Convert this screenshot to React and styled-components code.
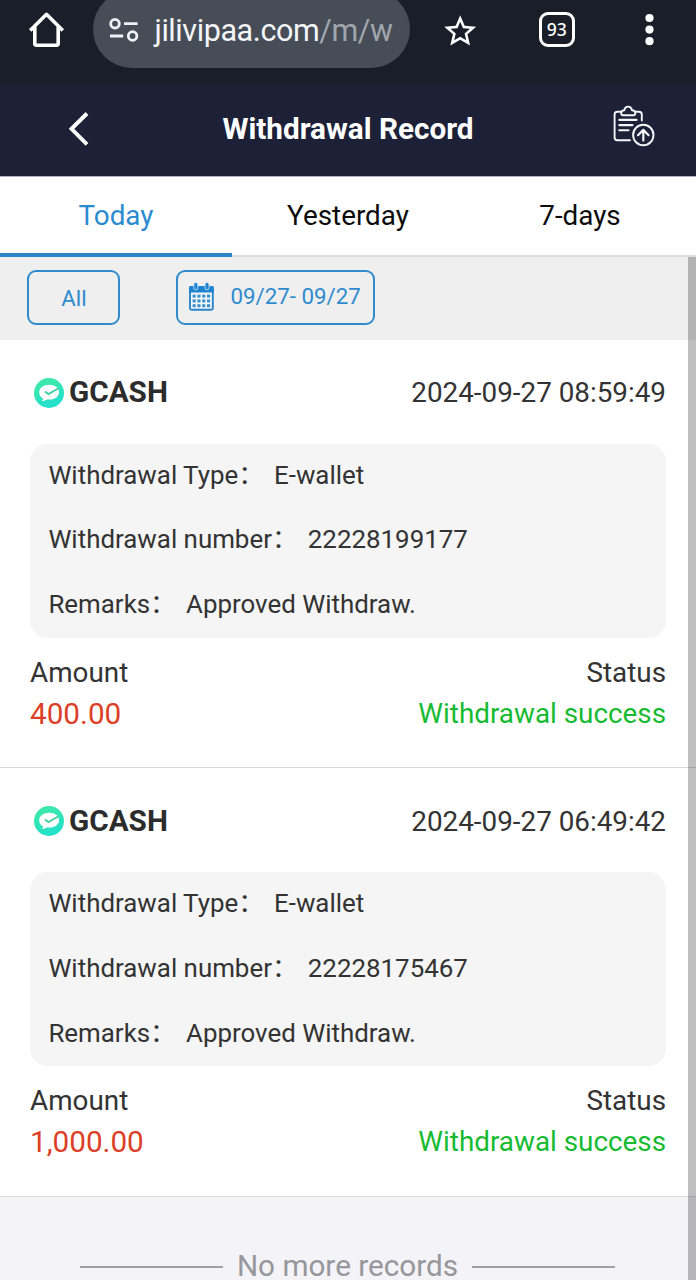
import React from "react";
import styled, { createGlobalStyle } from "styled-components";
import { MdStarOutline } from "react-icons/md";

const GlobalStyle = createGlobalStyle`
  * { box-sizing: border-box; }
  body {
    margin: 0;
    background: #f3f3f8;
    font-family: Roboto, "Noto Sans CJK SC", sans-serif;
    color: #333;
  }
`;

const Screen = styled.div`
  width: 696px;
  height: 1280px;
  overflow: hidden;
  display: flex;
  flex-direction: column;
`;

const BrowserBar = styled.div`
  flex: none;
  height: 85px;
  display: flex;
  align-items: flex-start;
  background: #191e29;
  color: #fff;
`;

const HomeSlot = styled.div`
  width: 93px;
  padding: 10px 0 0 27px;
  svg { display: block; }
`;

const AddressPill = styled.div`
  width: 317px;
  height: 78px;
  margin-top: -10px;
  padding: 2px 0 0 15px;
  border-radius: 39px;
  background: #464d57;
  display: flex;
  align-items: center;
`;

const Url = styled.span`
  margin-left: 15.5px;
  font-size: 30.5px;
  letter-spacing: -0.42px;
  white-space: nowrap;
  color: #f3f5f8;
  span { color: #a1a6ae; }
`;

const BarIcons = styled.div`
  flex: 1;
  display: flex;
  padding: 12px 42px 0 31px;
  align-items: flex-start;
  justify-content: space-between;
  svg { display: block; }
`;

const TabCount = styled.div`
  width: 36px;
  height: 35px;
  margin-right: 10px;
  border: 3.6px solid #fff;
  border-radius: 9px;
  display: flex;
  align-items: center;
  justify-content: center;
  font: 500 17.5px/1 "Noto Sans", sans-serif;
`;

const Header = styled.header`
  flex: none;
  height: 92px;
  border-bottom: 1px solid #aeb0c4;
  display: grid;
  grid-template-columns: 1fr auto 1fr;
  align-items: center;
  background: #1d2137;
  color: #fff;
  svg { display: block; }
`;

const BackButton = styled.div`
  padding: 0 0 4px 66px;
`;

const Title = styled.h1`
  margin: 0;
  padding-bottom: 4px;
  font-size: 29.7px;
  font-weight: 700;
  white-space: nowrap;
`;

const HistoryButton = styled.div`
  justify-self: end;
  padding: 0 40px 9px 0;
`;

const Tabs = styled.nav`
  flex: none;
  height: 80px;
  display: grid;
  grid-template-columns: repeat(3, 1fr);
  background: #fff;
  border-bottom: 2px solid #dcdcdc;
`;

const Tab = styled.div`
  height: 80px;
  padding-bottom: ${(p) => (p.$active ? "0" : "3px")};
  border-bottom: ${(p) => (p.$active ? "4px solid #2a86c9" : "0")};
  padding-top: ${(p) => (p.$active ? "1px" : "0")};
  display: flex;
  align-items: center;
  justify-content: center;
  font-size: 27.84px;
  color: ${(p) => (p.$active ? "#2a8bd0" : "#0c0c0c")};
`;

const Body = styled.main`
  position: relative;
  flex: 1;
  min-height: 0;
`;

const Filters = styled.div`
  height: 83px;
  padding: 12.5px 27.4px 0;
  display: flex;
  gap: 56px;
  background: #efefef;
`;

const FilterButton = styled.div`
  width: ${(p) => p.$width}px;
  height: 55.5px;
  border: 2px solid #2f8bce;
  border-radius: 9px;
  display: flex;
  align-items: center;
  justify-content: ${(p) => (p.$date ? "flex-start" : "center")};
  gap: 16.5px;
  padding: ${(p) => (p.$date ? "0 0 2px 9.5px" : "2px 0 0")};
  font-size: 22.3px;
  white-space: nowrap;
  color: #2f8bce;
`;

const Card = styled.section`
  height: 428.4px;
  padding: 0 30px;
  background: #fff;
  border-bottom: 1px solid #d9d9d9;
`;

const CardHead = styled.div`
  height: 103.5px;
  display: flex;
  align-items: center;
  justify-content: space-between;
  padding-left: 4px;
`;

const Provider = styled.div`
  display: flex;
  align-items: center;
  gap: 5px;
  font-size: 29.7px;
  font-weight: 700;
  color: #2c2c2c;
  svg { display: block; position: relative; top: 1px; }
`;

const Time = styled.div`
  padding-top: 2px;
  font-size: 27.84px;
`;

const Details = styled.div`
  height: 194.6px;
  padding: 0 18.4px;
  border-radius: 18px;
  background: #f5f5f5;
`;

const Detail = styled.div`
  height: 64.9px;
  line-height: 63.2px;
  font-size: 25.9px;
  white-space: nowrap;
  span { margin-left: 10px; }
`;

const Summary = styled.div`
  display: flex;
  justify-content: space-between;
  padding-top: 14px;
`;

const Column = styled.div`
  text-align: ${(p) => p.$align || "left"};
`;

const Label = styled.div`
  font-size: 27.84px;
  line-height: 41px;
`;

const Amount = styled.div`
  font-size: 29.7px;
  line-height: 41px;
  color: #dc3f27;
`;

const Status = styled.div`
  font-size: 27.84px;
  line-height: 41px;
  color: #16bb31;
`;

const EndNote = styled.div`
  display: flex;
  align-items: center;
  justify-content: center;
  gap: 14px;
  padding: 56.5px 1px 0 0;
  font-size: 29.7px;
  line-height: 26px;
  white-space: nowrap;
  color: #97979b;
`;

const Rule = styled.span`
  width: 143px;
  height: 2px;
  margin-top: 1px;
  background: #a0a0a4;
`;

const Scrollbar = styled.div`
  position: absolute;
  top: 0;
  right: 0;
  width: 8px;
  height: 100%;
  background: rgba(0, 0, 0, 0.25);
`;

const HomeIcon = () => (
  <svg width="39" height="39" viewBox="27 10 39 39" fill="none" stroke="#fff" strokeWidth="3.6" strokeLinecap="butt" strokeLinejoin="round">
    <path d="M30.2 30.6 46.5 14.3 62.8 30.6" />
    <path d="M34.8 27V43.6Q34.8 45.2 36.4 45.2H56.6Q58.2 45.2 58.2 43.6V27" />
  </svg>
);

const TuneIcon = () => (
  <svg width="31" height="24" viewBox="108 18 31 24" fill="none" stroke="#eef1f5" strokeWidth="2.8">
    <circle cx="115" cy="23.7" r="4.3" />
    <path d="M124 23.7h13.6M110 36h13.2" />
    <circle cx="132.6" cy="36" r="4.3" />
  </svg>
);

const MenuDots = () => (
  <svg width="10" height="36" viewBox="0 0 10 36" fill="#fff">
    <circle cx="5.5" cy="6" r="4.1" />
    <circle cx="5.5" cy="17.6" r="4.1" />
    <circle cx="5.5" cy="29.2" r="4.1" />
  </svg>
);

const BackIcon = () => (
  <svg width="24" height="36" viewBox="67 111 24 36" fill="none" stroke="#fff" strokeWidth="3.9">
    <path d="M88 113.5 72.5 128.8 88 144.3" />
  </svg>
);

const HistoryIcon = () => (
  <svg width="44" height="44" viewBox="612 104 44 44" fill="none" stroke="#f4f5fa" strokeWidth="1.9" strokeLinecap="round" strokeLinejoin="round">
    <path d="M621 111.8H617.3Q614.6 111.8 614.6 114.5V137.6Q614.6 140.3 617.3 140.3H630M635.4 111.8H639Q641.8 111.8 641.8 114.5V120.5" />
    <path d="M623 115.3H633.4Q635.3 115.3 635.3 113.2Q635.2 110.3 632 110.2Q631.2 106.6 628.1 106.6Q625 106.6 624.3 110.2Q621.3 110.3 621.2 113.2Q621.2 115.3 623 115.3Z" />
    <path d="M619.3 119.9H636.5M619.3 125.1H632.5M619.3 130.2H628.5" strokeWidth="2.1" />
    <circle cx="643.3" cy="135" r="10.2" />
    <path d="M643.3 140.6V130.2M638 135.2 643.3 129.9 648.6 135.2" strokeWidth="2.2" />
  </svg>
);

const CalendarIcon = () => (
  <svg width="26" height="29" viewBox="188 282 26 29">
    <rect x="190" y="287" width="22.8" height="22.8" rx="1.5" fill="#f3f6f9" stroke="#2a86c9" strokeWidth="1.9" />
    <path d="M189 292.5V287.5Q189 286 190.5 286H212.3Q213.8 286 213.8 287.5V292.5Z" fill="#1f84d1" />
    <g fill="#1f84d1" stroke="#dcebf7" strokeWidth="0.8">
      <rect x="193.8" y="282.4" width="4" height="7.4" rx="2" />
      <rect x="205" y="282.4" width="4" height="7.4" rx="2" />
    </g>
    <g fill="#3a8fce">
      {[294.6, 299.4, 304.2].map((y) =>
        [192.6, 197.4, 202.2, 207].map((x) => <rect key={`${x}-${y}`} x={x} y={y} width="3.1" height="3" />)
      )}
    </g>
  </svg>
);

const GcashIcon = () => (
  <svg width="30" height="30" viewBox="0 0 30 30">
    <defs>
      <linearGradient id="gcash" x1="0" y1="0" x2="0.4" y2="1">
        <stop offset="0" stopColor="#45eaa2" />
        <stop offset="1" stopColor="#22e0cb" />
      </linearGradient>
    </defs>
    <circle cx="15" cy="15" r="15" fill="url(#gcash)" />
    <path d="M15.3 6.8C9.5 6.8 5.2 10.1 5.2 14.4c0 2.6 1.5 4.7 3.9 6-.1 1-.6 1.8-1.2 2.6 2 .1 3.6-.6 4.8-1.5 7 .7 12.3-2.3 12.3-7.6C25 9.8 21 6.8 15.3 6.8Z" fill="#fff" />
    <path d="m11 13.6 3.4 2.5 9.8-5.6" fill="none" stroke="#3fcfa0" strokeWidth="1.8" />
  </svg>
);

const records = [
  { time: "2024-09-27 08:59:49", number: "22228199177", amount: "400.00" },
  { time: "2024-09-27 06:49:42", number: "22228175467", amount: "1,000.00" },
];

const RecordCard = ({ time, number, amount }) => (
  <Card>
    <CardHead>
      <Provider>
        <GcashIcon />
        GCASH
      </Provider>
      <Time>{time}</Time>
    </CardHead>
    <Details>
      <Detail>Withdrawal Type：<span>E-wallet</span></Detail>
      <Detail>Withdrawal number：<span>{number}</span></Detail>
      <Detail>Remarks：<span>Approved Withdraw.</span></Detail>
    </Details>
    <Summary>
      <Column>
        <Label>Amount</Label>
        <Amount>{amount}</Amount>
      </Column>
      <Column $align="right">
        <Label>Status</Label>
        <Status>Withdrawal success</Status>
      </Column>
    </Summary>
  </Card>
);

export default function App() {
  return (
    <Screen>
      <GlobalStyle />
      <BrowserBar>
        <HomeSlot>
          <HomeIcon />
        </HomeSlot>
        <AddressPill>
          <TuneIcon />
          <Url>
            jilivipaa.com<span>/m/w</span>
          </Url>
        </AddressPill>
        <BarIcons>
          <MdStarOutline size={38.4} />
          <TabCount>93</TabCount>
          <MenuDots />
        </BarIcons>
      </BrowserBar>
      <Header>
        <BackButton>
          <BackIcon />
        </BackButton>
        <Title>Withdrawal Record</Title>
        <HistoryButton>
          <HistoryIcon />
        </HistoryButton>
      </Header>
      <Tabs>
        <Tab $active>Today</Tab>
        <Tab>Yesterday</Tab>
        <Tab>7-days</Tab>
      </Tabs>
      <Body>
        <Filters>
          <FilterButton $width={93}>All</FilterButton>
          <FilterButton $width={198.5} $date>
            <CalendarIcon />
            09/27- 09/27
          </FilterButton>
        </Filters>
        {records.map((r) => (
          <RecordCard key={r.number} {...r} />
        ))}
        <EndNote>
          <Rule />
          No more records
          <Rule />
        </EndNote>
        <Scrollbar />
      </Body>
    </Screen>
  );
}
